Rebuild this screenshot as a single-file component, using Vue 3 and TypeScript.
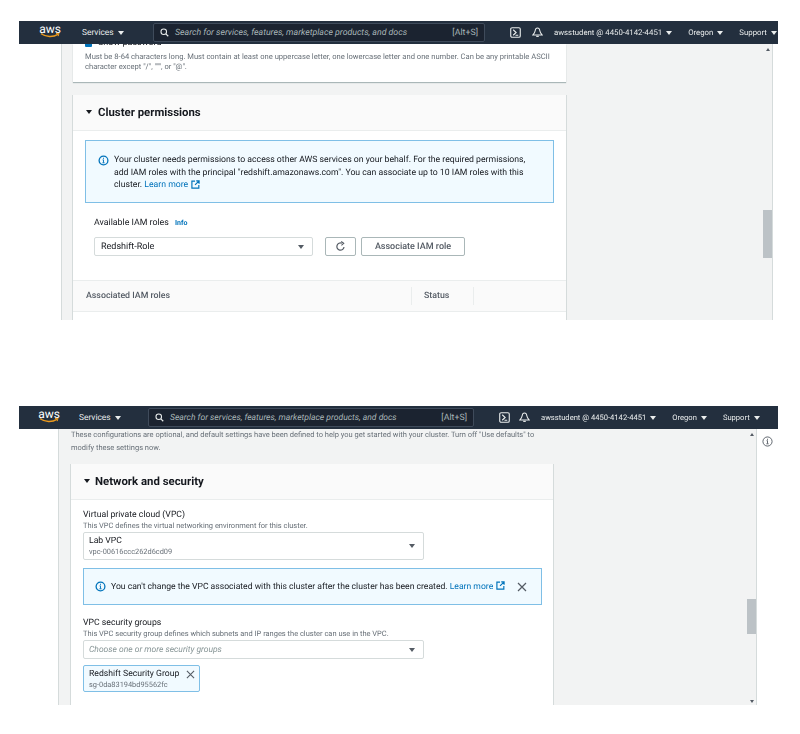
<script setup lang="ts">
const hintText = 'Must be 8-64 characters long. Must contain at least one uppercase letter, one lowercase letter and one number. Can be any printable ASCII character except "/", """, or "@".'
</script>

<template>
  <div class="page">
    <section class="shot shot-a">
      <header class="nav">
        <div class="logo"><span class="logo-text">aws</span><svg class="smile" viewBox="0 0 20 5"><path d="M1 .8C6 4.2 13 4.4 18 1.4" fill="none" stroke="#ec9a1e" stroke-width="1.3"/><path d="M16 .6l3-.4-.8 3" fill="none" stroke="#ec9a1e" stroke-width="1"/></svg></div>
        <span class="nav-item services">Services<i class="caret light"></i></span>
        <div class="search">
          <svg class="mag" viewBox="0 0 12 12"><circle cx="5" cy="5" r="3.7" fill="none" stroke="#eaeded" stroke-width="1.4"/><path d="M7.8 7.8L11 11" stroke="#eaeded" stroke-width="1.6"/></svg>
          <span class="placeholder">Search for services, features, marketplace products, and docs</span>
          <span class="shortcut">[Alt+S]</span>
        </div>
        <svg class="term" viewBox="0 0 12 12"><rect x=".8" y=".8" width="10.4" height="10.4" rx="1.5" fill="none" stroke="#eaeded" stroke-width="1.2"/><path d="M3.5 3l3.2 3-3.2 3M6 9h3" fill="none" stroke="#eaeded" stroke-width="1.2"/></svg>
        <svg class="bell" viewBox="0 0 12 12"><path d="M6 1C4.2 1 3.6 2.6 3.4 4.2 3.2 6 2.4 7 1 8.6h10C9.600 7 8.800 6 8.600 4.200 8.400 2.600 7.800 1 6 1z" fill="none" stroke="#eaeded" stroke-width="1.100"/><path d="M4.600 10.200h2.800" stroke="#eaeded" stroke-width="1.300"/></svg>
        <span class="nav-item user">awsstudent @ 4450-4142-4451<i class="caret light"></i></span>
        <span class="nav-item region">Oregon<i class="caret light"></i></span>
        <span class="nav-item support">Support<i class="caret light"></i></span>
      </header>
      <div class="body">
        <main class="content">
          <div class="card card-first">
            <div class="show-pass"><span class="check"></span><span>Show password</span></div>
            <p class="hint hint-long">{{ hintText }}</p>
          </div>
          <div class="card card-second">
            <h2 class="card-head"><i class="caret dark big"></i>Cluster permissions</h2>
            <div class="card-body">
              <div class="alert alert-a">
                <svg class="info" viewBox="0 0 12 12"><circle cx="6" cy="6" r="4.800" fill="none" stroke="#0073bb" stroke-width="1.400"/><path d="M6 5.200v3.200M4.800 8.500h2.400M5 5.300h1M6 3v1.200" fill="none" stroke="#0073bb" stroke-width="1"/></svg>
                <p>Your cluster needs permissions to access other AWS services on your behalf. For the required permissions, add IAM roles with the principal "redshift.amazonaws.com". You can associate up to 10 IAM roles with this cluster. <a>Learn more<svg class="ext" viewBox="0 0 10 10"><path d="M4.500 1.300H1v7.700h7.700V5.500M5.800 1h3.200v3.200M9 1L4.500 5.500" fill="none" stroke="#0073bb" stroke-width="1.300"/></svg></a></p>
              </div>
              <div class="role-label">Available IAM roles <a class="info-link">Info</a></div>
              <div class="role-row">
                <div class="select role-select"><span>Redshift-Role</span><i class="caret gray"></i></div>
                <button class="btn btn-icon"><svg viewBox="0 0 12 12"><path d="M9.800 6.500A3.900 3.900 0 1 1 7.500 2.500" fill="none" stroke="#545b64" stroke-width="1.300"/><path d="M6.800 .6l2.700 1.900-2.500 2.200" fill="none" stroke="#545b64" stroke-width="1.200"/></svg></button>
                <button class="btn">Associate IAM role</button>
              </div>
            </div>
            <div class="table-head"><span class="col-name">Associated IAM roles</span><span class="col-status">Status</span><span class="col-rest"></span></div>
          </div>
        </main>
        <aside class="track track-a"><i class="arrow up"></i><i class="thumb"></i></aside>
      </div>
    </section>

    <section class="shot shot-b">
      <header class="nav">
        <div class="logo"><span class="logo-text">aws</span><svg class="smile" viewBox="0 0 20 5"><path d="M1 .8C6 4.2 13 4.4 18 1.4" fill="none" stroke="#ec9a1e" stroke-width="1.300"/><path d="M16 .6l3-.4-.8 3" fill="none" stroke="#ec9a1e" stroke-width="1"/></svg></div>
        <span class="nav-item services">Services<i class="caret light"></i></span>
        <div class="search">
          <svg class="mag" viewBox="0 0 12 12"><circle cx="5" cy="5" r="3.700" fill="none" stroke="#eaeded" stroke-width="1.400"/><path d="M7.800 7.800L11 11" stroke="#eaeded" stroke-width="1.600"/></svg>
          <span class="placeholder">Search for services, features, marketplace products, and docs</span>
          <span class="shortcut">[Alt+S]</span>
        </div>
        <svg class="term" viewBox="0 0 12 12"><rect x=".8" y=".8" width="10.400" height="10.400" rx="1.500" fill="none" stroke="#eaeded" stroke-width="1.200"/><path d="M3.500 3l3.200 3-3.200 3M6 9h3" fill="none" stroke="#eaeded" stroke-width="1.200"/></svg>
        <svg class="bell" viewBox="0 0 12 12"><path d="M6 1C4.200 1 3.600 2.600 3.400 4.200 3.200 6 2.400 7 1 8.600h10C9.600 7 8.800 6 8.600 4.200 8.400 2.600 7.800 1 6 1z" fill="none" stroke="#eaeded" stroke-width="1.100"/><path d="M4.600 10.200h2.800" stroke="#eaeded" stroke-width="1.300"/></svg>
        <span class="nav-item user">awsstudent @ 4450-4142-4451<i class="caret light"></i></span>
        <span class="nav-item region">Oregon<i class="caret light"></i></span>
        <span class="nav-item support">Support<i class="caret light"></i></span>
      </header>
      <div class="body">
        <main class="content">
          <p class="hint hint-top">These configurations are optional, and default settings have been defined to help you get started with your cluster. Turn off "Use defaults" to modify these settings now.</p>
          <div class="card card-net">
            <h2 class="card-head"><i class="caret dark big"></i>Network and security</h2>
            <div class="card-body">
              <div class="field-label">Virtual private cloud (VPC)</div>
              <div class="field-hint">This VPC defines the virtual networking environment for this cluster.</div>
              <div class="select vpc-select"><div><div class="opt-title">Lab VPC</div><div class="opt-sub">vpc-00616ccc262d6cd09</div></div><i class="caret gray"></i></div>
              <div class="alert alert-b">
                <svg class="info" viewBox="0 0 12 12"><circle cx="6" cy="6" r="4.800" fill="none" stroke="#0073bb" stroke-width="1.400"/><path d="M6 5.200v3.200M4.800 8.500h2.400M5 5.300h1M6 3v1.200" fill="none" stroke="#0073bb" stroke-width="1"/></svg>
                <p>You can't change the VPC associated with this cluster after the cluster has been created. <a>Learn more<svg class="ext" viewBox="0 0 10 10"><path d="M4.500 1.300H1v7.700h7.700V5.500M5.800 1h3.200v3.200M9 1L4.500 5.500" fill="none" stroke="#0073bb" stroke-width="1.300"/></svg></a></p>
                <svg class="close" viewBox="0 0 10 10"><path d="M1 1l8 8M9 1L1 9" stroke="#545b64" stroke-width="1.200"/></svg>
              </div>
              <div class="field-label">VPC security groups</div>
              <div class="field-hint">This VPC security group defines which subnets and IP ranges the cluster can use in the VPC.</div>
              <div class="select sg-select"><span class="sg-placeholder">Choose one or more security groups</span><i class="caret gray"></i></div>
              <div class="token"><div><div class="opt-title">Redshift Security Group</div><div class="opt-sub">sg-0da83194bd95562fc</div></div><svg class="close token-x" viewBox="0 0 10 10"><path d="M1 1l8 8M9 1L1 9" stroke="#545b64" stroke-width="1.200"/></svg></div>
            </div>
          </div>
        </main>
        <aside class="track track-b"><i class="arrow up"></i><i class="thumb"></i><i class="arrow down"></i></aside>
        <div class="side-panel"><svg viewBox="0 0 12 12"><circle cx="6" cy="6" r="5" fill="none" stroke="#545b64" stroke-width="1"/><path d="M6 5v3.300M4.800 8.500h2.400M5 5.100h1M6 3v1.200" fill="none" stroke="#545b64" stroke-width="1"/></svg></div>
      </div>
    </section>
  </div>
</template>

<style>
html, body { background: #fff; }
</style>

<style scoped>
.page {
  width: 800px;
  height: 734px;
  padding: 21px 0 0 19px;
  box-sizing: border-box;
  overflow: hidden;
  font-family: Roboto, "Noto Sans", sans-serif;
  text-rendering: geometricPrecision;
  color: #16191f;
}
.shot {
  width: 759px;
  height: 299px;
  display: flex;
  flex-direction: column;
  overflow: hidden;
  filter: blur(0.3px);
}
.shot-b { margin-top: 86px; }

/* nav */
.nav {
  height: 23px;
  flex: none;
  background: #232f3e;
  display: flex;
  align-items: center;
  color: #eaeded;
  font-size: 7.800px;
  white-space: nowrap;
}
.shot-b .nav { font-size: 7.600px; }
.nav > * { flex: none; }
.logo { width: 20px; display: flex; flex-direction: column; align-items: center; margin-top: -3px; }
.logo-text { font-size: 12px; line-height: 10px; color: #fff; letter-spacing: -0.1px; }
.smile { width: 20px; height: 5px; margin-top: -1px; }
.nav-item { display: inline-flex; align-items: center; }
.services { font-size: 8.400px; width: 45px; }
.search {
  height: 19px;
  box-sizing: border-box;
  display: flex;
  align-items: center;
  background: #1b2330;
  border: 1px solid #3f4b5b;
  border-radius: 2px;
  color: #aab7b8;
}
.mag { width: 9px; height: 9px; margin-left: 6px; flex: none; }
.placeholder { font-style: italic; font-size: 8.750px; margin-left: 6px; flex: 1; }
.shot-b .placeholder { font-size: 8.550px; }
.shortcut { font-size: 8.800px; margin-right: 6px; }
.term { width: 11px; height: 11px; }
.bell { width: 11px; height: 11px; }
.caret {
  display: inline-block;
  width: 0;
  height: 0;
  border-left: 3px solid transparent;
  border-right: 3px solid transparent;
  border-top: 4.500px solid #eaeded;
  margin-left: 4px;
}
.caret.dark { border-top-color: #16191f; }
.caret.gray { border-top-color: #545b64; margin-left: 0; }
.caret.big { margin: 0 6px 0 1px; }
.shot-b .caret.big { margin-right: 5px; }

.shot-a .logo { margin-left: 21px; }
.shot-a .services { margin-left: 22px; }
.shot-a .search { margin-left: 26px; width: 332px; }
.shot-a .term { margin-left: 25px; }
.shot-a .bell { margin-left: 11px; }
.shot-a .user { margin-left: 11px; }
.shot-a .region { margin-left: 16px; }
.shot-a .support { margin-left: 16px; }

.shot-b .logo { margin-left: 20px; }
.shot-b .services { margin-left: 20px; }
.shot-b .search { margin-left: 24px; width: 326px; }
.shot-b .term { margin-left: 25px; }
.shot-b .bell { margin-left: 9px; }
.shot-b .user { margin-left: 11px; }
.shot-b .region { margin-left: 16px; }
.shot-b .support { margin-left: 16px; }

/* body */
.body { flex: 1; min-height: 0; display: flex; }
.shot-a .body { padding: 0 5px 0 42px; }
.shot-b .body { padding-left: 39px; }
.content {
  flex: 1;
  min-width: 0;
  background: #f2f3f3;
  border-left: 1px solid #d5dbdb;
  overflow: hidden;
}
.shot-a .content { padding-left: 11px; }
.shot-b .content { padding-left: 12px; }

.card { background: #fff; box-shadow: 0 1px 1px #aab7b8; }
.shot-a .card { width: 493px; }
.card-first { height: 38px; box-sizing: border-box; padding: 0 12px; overflow: hidden; position: relative; }
.show-pass { display: flex; align-items: center; gap: 6px; font-size: 9px; margin-top: -6px; height: 10px; color: #16191f; }
.check { width: 7px; height: 7px; background: #0073bb; border-radius: 1px; }
.hint { margin: 0; color: #687078; font-size: 7.600px; line-height: 9.500px; }
.hint-long { margin-top: 4px; }
.card-second { margin-top: 13px; height: 240px; }
.card-head {
  margin: 0;
  height: 36px;
  box-sizing: border-box;
  background: #fafafa;
  border-bottom: 1px solid #eaeded;
  display: flex;
  align-items: center;
  font-size: 11.400px;
  font-weight: 700;
  padding: 0 0 2px 12px;
}
.alert { background: #f1faff; border: 1px solid #7fbfe6; box-sizing: border-box; display: flex; }
.alert p { margin: 0; color: #16191f; }
.alert a, .info-link { color: #0073bb; }
.info { width: 11px; height: 11px; flex: none; }
.ext { width: 9px; height: 9px; margin-left: 3px; vertical-align: -1.500px; }
.close { width: 10px; height: 10px; flex: none; }

.card-second .card-body { padding: 9px 12px 0; }
.alert-a { height: 63px; padding: 13px 18px 0 12px; }
.alert-a p { font-size: 8.700px; line-height: 12.500px; margin-left: 5px; }
.alert-a .info { margin-top: 1px; }
.role-label { font-size: 8.800px; color: #16191f; margin: 14px 0 0 9px; line-height: 12px; }
.info-link { font-size: 7px; font-weight: 700; margin-left: 4px; }
.role-row { display: flex; margin: 8px 0 0 9px; align-items: stretch; }
.select {
  background: #fff;
  border: 1px solid #d5dbdb;
  border-radius: 2px;
  box-sizing: border-box;
  display: flex;
  align-items: center;
  justify-content: space-between;
  font-size: 9px;
  padding: 0 8px 0 5px;
}
.role-select { width: 219px; height: 19px; padding-left: 6px; }
.btn {
  height: 19px;
  font-family: inherit;
  background: #fff;
  border: 1px solid #aab7b8;
  border-radius: 2px;
  padding: 0;
  font-size: 9px;
  font-weight: 500;
  color: #545b64;
  width: 104px;
  margin-left: 5px;
  display: flex;
  align-items: center;
  justify-content: center;
  text-rendering: geometricPrecision;
}
.btn-icon { width: 31px; margin-left: 12px; }
.btn-icon svg { width: 11px; height: 11px; }
.table-head {
  margin-top: 24px;
  height: 32px;
  box-sizing: border-box;
  background: #fafafa;
  border-top: 1px solid #eaeded;
  border-bottom: 1px solid #eaeded;
  display: flex;
  align-items: center;
  font-size: 8.800px;
  font-weight: 500;
  color: #545b64;
}
.col-name { width: 339px; padding-left: 13px; box-sizing: border-box; border-right: 1px solid #eaeded; line-height: 18px; }
.col-status { width: 62px; padding-left: 12px; box-sizing: border-box; border-right: 1px solid #eaeded; line-height: 18px; }
.card-second { box-shadow: 1px 0 0 #d5dbdb, -1px 0 0 #d5dbdb; }

.hint-top { font-size: 7.500px; line-height: 12.500px; width: 470px; }
.card-net { margin-top: 10px; width: 482px; height: 260px; box-shadow: 1px 0 0 #d5dbdb, -1px 0 0 #d5dbdb; }
.card-net .card-body { padding: 9px 12px 0; }
.field-label { font-size: 8.700px; line-height: 12px; color: #16191f; }
.field-hint { font-size: 7.470px; line-height: 10px; color: #687078; }
.vpc-select { width: 341px; height: 28px; margin-top: 1px; }
.opt-title { font-size: 8.650px; line-height: 11px; }
.opt-sub { font-size: 7.400px; line-height: 10px; color: #687078; }
.alert-b { width: 459px; height: 37px; margin: 8px 0 12px; align-items: center; padding: 0 14px 0 11px; }
.alert-b p { font-size: 8.600px; margin-left: 5px; flex: 1; white-space: nowrap; }
.sg-select { width: 341px; height: 19px; margin-top: 1px; }
.sg-placeholder { font-style: italic; color: #879596; font-size: 8.500px; }
.token {
  width: 117px;
  height: 27px;
  margin-top: 6px;
  box-sizing: border-box;
  background: #f1faff;
  border: 1px solid #7fbfe6;
  border-radius: 2px;
  display: flex;
  align-items: flex-start;
  justify-content: space-between;
  padding: 3px 4px 0 5px;
  white-space: nowrap;
}
.token-x { margin-top: 1px; width: 9px; height: 9px; }

/* scrollbar */
.track { width: 9px; flex: none; background: #f2f3f3; display: flex; flex-direction: column; align-items: center; position: relative; }
.track-a { border-right: 1px solid #d5dbdb; }
.thumb { width: 9px; background: #bcc2c6; display: block; flex: none; }
.track-a .thumb { height: 48px; margin-top: 159px; }
.track-b .thumb { height: 35px; margin-top: 163px; }
.arrow { width: 0; height: 0; border-left: 2.500px solid transparent; border-right: 2.500px solid transparent; display: block; flex: none; }
.arrow.up { border-bottom: 3px solid #545b64; margin-top: 4px; }
.arrow.down { border-top: 3px solid #545b64; margin-top: auto; margin-bottom: 2px; }
.side-panel { width: 22px; flex: none; background: #fff; border-left: 1px solid #d5dbdb; box-sizing: border-box; padding: 7px 0 0 5px; }
.side-panel svg { width: 11px; height: 11px; display: block; }
</style>
